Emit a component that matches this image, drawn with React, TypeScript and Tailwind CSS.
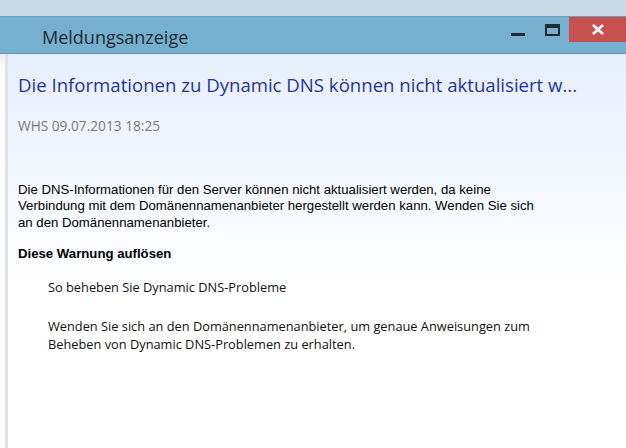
import React from 'react'

// Windows-8 style message viewer window
export default function App() {
  return (
    <div className="w-[626px] h-[448px] overflow-hidden flex flex-col bg-white">
      {/* strip above the title bar */}
      <div className="h-[17px] bg-[#c9dbe9] border-b border-[#6b9cb8]" />

      {/* title bar */}
      <div className="h-[37px] bg-[#75b0d0] border-b border-[#5f97b6] flex items-start">
        <div
          className="pl-[42px] pt-[7px] text-[18px] text-[#1e2a33] flex-1"
          style={{ fontFamily: '"Open Sans", "Noto Sans", sans-serif' }}
        >
          Meldungsanzeige
        </div>
        <button className="w-[33px] h-[25px] flex items-center justify-center mr-[2px]">
          <span className="block w-[14px] h-[3px] bg-[#1f2a30] mt-[10px]" />
        </button>
        <button className="w-[33px] h-[25px] flex items-center justify-center">
          <span className="block w-[15px] h-[12px] border-2 border-t-[4px] border-[#1f2a30] mt-[1px]" />
        </button>
        <button className="w-[57px] h-[25px] bg-[#c75050] flex items-center justify-center">
          <svg width="12" height="11" viewBox="0 0 12 11">
            <path d="M1 1 L11 10 M11 1 L1 10" stroke="#fff" strokeWidth="2.6" />
          </svg>
        </button>
      </div>

      {/* body */}
      <div className="flex-1 flex">
        <div className="w-[5px] bg-gradient-to-b from-[#eeeeee] to-white to-[18px]" />
        <div className="w-[3px] bg-[#e2e2e2]" />
        <div className="flex-1 bg-gradient-to-b from-[#e7effd] via-[#f7faff] via-40% to-white to-60% pl-[10px]">
          <div
            className="mt-[18px] text-[18.6px] text-[#1c35a0] leading-[26px] whitespace-nowrap"
            style={{ fontFamily: '"Open Sans", "Noto Sans", sans-serif' }}
          >
            Die Informationen zu Dynamic DNS können nicht aktualisiert w...
          </div>
          <div
            className="mt-[18px] text-[13.7px] text-[#7a7a7a]"
            style={{ fontFamily: '"Open Sans", "Noto Sans", sans-serif' }}
          >
            WHS 09.07.2013 18:25
          </div>

          <div
            className="mt-[45px] text-[13.2px] leading-[16.5px] text-black w-[590px]"
            style={{ fontFamily: '"Liberation Sans", Arial, sans-serif' }}
          >
            <p>
              Die DNS-Informationen für den Server können nicht aktualisiert werden, da keine
              <br />
              Verbindung mit dem Domänennamenanbieter hergestellt werden kann. Wenden Sie sich
              <br />
              an den Domänennamenanbieter.
            </p>
            <p className="mt-[15px] font-bold">Diese Warnung auflösen</p>
          </div>

          <div
            className="pl-[30px] mt-[15px] text-[12.8px] leading-[18px] text-[#111]"
            style={{ fontFamily: '"Open Sans", "Noto Sans", sans-serif' }}
          >
            <p>So beheben Sie Dynamic DNS-Probleme</p>
            <p className="mt-[21px]">
              Wenden Sie sich an den Domänennamenanbieter, um genaue Anweisungen zum
              <br />
              Beheben von Dynamic DNS-Problemen zu erhalten.
            </p>
          </div>
        </div>
      </div>
    </div>
  )
}
